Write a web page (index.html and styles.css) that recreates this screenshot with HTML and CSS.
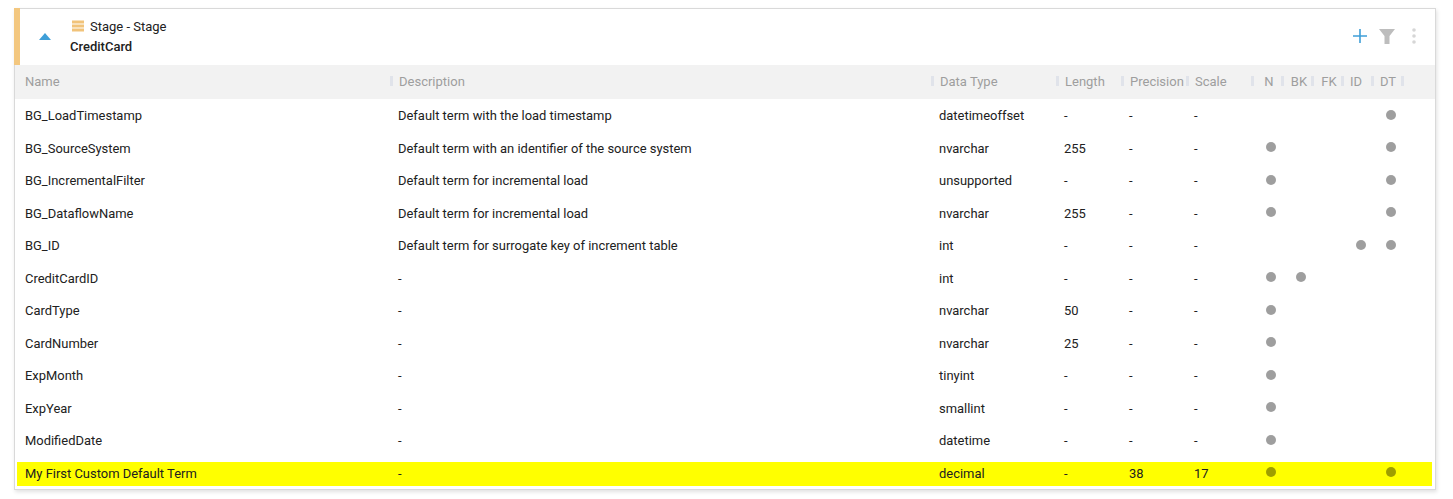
FILE: index.html
```html
<!DOCTYPE html>
<html lang="en">
<head>
<meta charset="utf-8">
<title>CreditCard</title>
<link rel="stylesheet" href="styles.css">
</head>
<body>
<section class="card">
  <header class="top">
    <button class="caret" aria-label="Collapse"><svg width="12" height="7" viewBox="0 0 12 7"><path d="M0 7 6 0l6 7z" fill="#3f9fd8"/></svg></button>
    <div class="titles">
      <div class="stage"><svg class="layers" width="12" height="12" viewBox="0 0 12 12"><path d="M0 .5h12v3H0zM0 4.5h12v3H0zM0 8.5h12v3H0z" fill="#f1c37a"/></svg><span>Stage - Stage</span></div>
      <div class="name">CreditCard</div>
    </div>
    <div class="actions">
      <svg width="14" height="14" viewBox="0 0 14 14"><path d="M6.2 0h1.6v14H6.2zM0 6.2h14v1.6H0z" fill="#3f9fd8"/></svg>
      <svg class="filter" width="16" height="15" viewBox="0 0 16 15"><path d="M0 0h16l-5.5 7v8h-5V7z" fill="#bdbdbd"/></svg>
      <svg class="more" width="4" height="16" viewBox="0 0 4 16"><circle cx="2" cy="2" r="1.8" fill="#d6d6d6"/><circle cx="2" cy="8" r="1.8" fill="#d6d6d6"/><circle cx="2" cy="14" r="1.8" fill="#d6d6d6"/></svg>
    </div>
  </header>
  <div class="row head">
    <div>Name</div>
    <div class="h">Description</div>
    <div class="h">Data Type</div>
    <div class="h">Length</div>
    <div class="h">Precision</div>
    <div class="h">Scale</div>
    <div class="h flag">N</div>
    <div class="h flag">BK</div>
    <div class="h flag">FK</div>
    <div class="h flag flag-id">ID</div>
    <div class="h flag flag-dt">DT</div>
    <div class="h"></div>
  </div>
  <div class="row"><div>BG_LoadTimestamp</div><div>Default term with the load timestamp</div><div>datetimeoffset</div><div>-</div><div>-</div><div>-</div><div></div><div></div><div></div><div></div><div class="c"><i></i></div></div>
  <div class="row"><div>BG_SourceSystem</div><div>Default term with an identifier of the source system</div><div>nvarchar</div><div>255</div><div>-</div><div>-</div><div class="c"><i></i></div><div></div><div></div><div></div><div class="c"><i></i></div></div>
  <div class="row"><div>BG_IncrementalFilter</div><div>Default term for incremental load</div><div>unsupported</div><div>-</div><div>-</div><div>-</div><div class="c"><i></i></div><div></div><div></div><div></div><div class="c"><i></i></div></div>
  <div class="row"><div>BG_DataflowName</div><div>Default term for incremental load</div><div>nvarchar</div><div>255</div><div>-</div><div>-</div><div class="c"><i></i></div><div></div><div></div><div></div><div class="c"><i></i></div></div>
  <div class="row"><div>BG_ID</div><div>Default term for surrogate key of increment table</div><div>int</div><div>-</div><div>-</div><div>-</div><div></div><div></div><div></div><div class="c"><i></i></div><div class="c"><i></i></div></div>
  <div class="row"><div>CreditCardID</div><div>-</div><div>int</div><div>-</div><div>-</div><div>-</div><div class="c"><i></i></div><div class="c"><i></i></div><div></div><div></div><div></div></div>
  <div class="row"><div>CardType</div><div>-</div><div>nvarchar</div><div>50</div><div>-</div><div>-</div><div class="c"><i></i></div><div></div><div></div><div></div><div></div></div>
  <div class="row"><div>CardNumber</div><div>-</div><div>nvarchar</div><div>25</div><div>-</div><div>-</div><div class="c"><i></i></div><div></div><div></div><div></div><div></div></div>
  <div class="row"><div>ExpMonth</div><div>-</div><div>tinyint</div><div>-</div><div>-</div><div>-</div><div class="c"><i></i></div><div></div><div></div><div></div><div></div></div>
  <div class="row"><div>ExpYear</div><div>-</div><div>smallint</div><div>-</div><div>-</div><div>-</div><div class="c"><i></i></div><div></div><div></div><div></div><div></div></div>
  <div class="row"><div>ModifiedDate</div><div>-</div><div>datetime</div><div>-</div><div>-</div><div>-</div><div class="c"><i></i></div><div></div><div></div><div></div><div></div></div>
  <div class="row custom"><div>My First Custom Default Term</div><div>-</div><div>decimal</div><div>-</div><div>38</div><div>17</div><div class="c"><i></i></div><div></div><div></div><div></div><div class="c"><i></i></div></div>
</section>
</body>
</html>
```
FILE: styles.css
```css
* { box-sizing: border-box; }
html, body { margin: 0; background: #fff; }
body {
  padding: 8px 17px 0 14px;
  font-family: Roboto, "Liberation Sans", sans-serif;
  font-size: 13px;
  color: #212121;
  height: 499px;
  overflow: hidden;
}
.card {
  width: 1422px;
  height: 482px;
  border: 1px solid #d9d9d9;
  background: #fff;
  box-shadow: 1px 2px 4px rgba(0,0,0,.12);
}
.top {
  height: 57px;
  margin-left: -1px;
  margin-top: -1px;
  border-left: 6px solid #f3c77f;
  display: flex;
  align-items: flex-start;
}
.caret {
  border: 0;
  background: none;
  padding: 0;
  margin: 25px 0 0 19px;
  width: 12px;
  height: 7px;
  display: flex;
}
.titles { margin-left: 19px; padding-top: 10px; }
.stage { display: flex; align-items: center; gap: 6px; height: 16px; }
.layers { margin-left: 2px; margin-top: 0; }
.name { font-weight: 500; font-size: 13px; margin-top: 3px; line-height: 20px; color: #212121; }
.actions {
  margin-left: auto;
  display: flex;
  align-items: center;
  padding: 20px 19px 0 0;
}
.filter { margin-left: 12px; }
.more { margin-left: 17px; }
.row {
  display: grid;
  grid-template-columns: 375px 541px 125px 65px 65px 65px 30px 30px 30px 30px 30px 34px;
  height: 32.5px;
  align-items: center;
  white-space: nowrap;
  font-size: 12.95px;
}
.row > div:first-child { padding-left: 10px; }
.row > div:nth-child(2),
.row > div:nth-child(3),
.row > div:nth-child(4),
.row > div:nth-child(5),
.row > div:nth-child(6) { padding-left: 8px; }
.head {
  height: 34px;
  margin-bottom: .5px;
  align-items: stretch;
  line-height: 34px;
  font-size: 13px;
  background: #f2f2f2;
  color: #9e9e9e;
}
.row.head > .h {
  padding-left: 9px;
  position: relative;
}
.row.head > .h::before {
  content: "";
  position: absolute;
  left: 0;
  top: 11px;
  width: 3px;
  height: 10px;
  background: #e0e3ea;
}
.row.head > .flag { padding-left: 6px; text-align: center; }
.row.head > .flag-id { padding-left: 3px; padding-right: 3px; }
.row.head > .flag-dt { padding-left: 4px; }
.c { display: flex; justify-content: center; padding-left: 9px; }
.c i {
  display: block;
  width: 10px;
  height: 10px;
  border-radius: 50%;
  background: rgba(0,0,0,.38);
  margin-top: -2px;
}
.custom {
  background: linear-gradient(#ff0, #ff0) no-repeat 2px 5px / 1415px 24px;
}
```
